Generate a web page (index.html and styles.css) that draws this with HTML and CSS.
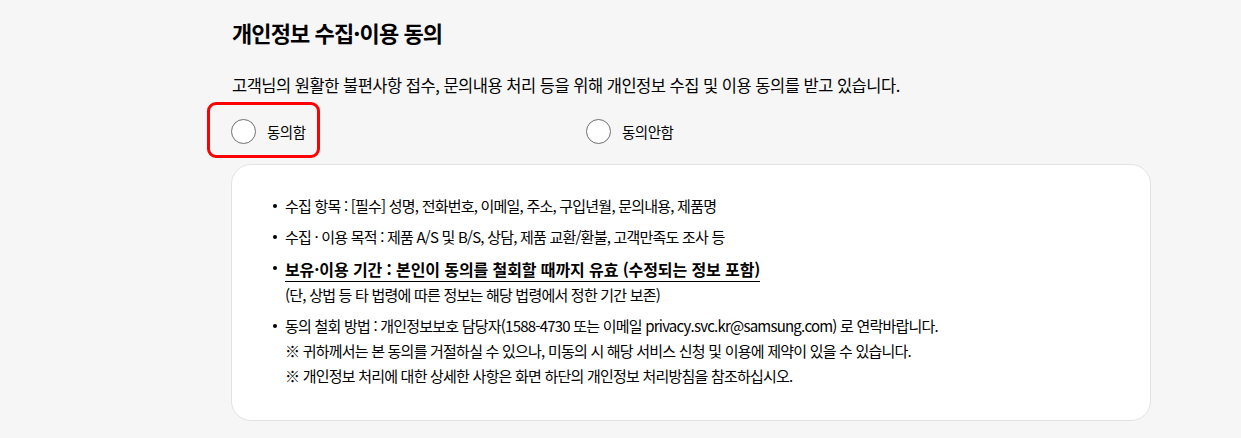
FILE: index.html
```html
<!DOCTYPE html>
<html lang="ko">
<head>
<meta charset="utf-8">
<link rel="stylesheet" href="styles.css">
</head>
<body>
<main class="wrap">
  <h2 class="title">개인정보 수집·이용 동의</h2>
  <p class="desc">고객님의 원활한 불편사항 접수, 문의내용 처리 등을 위해 개인정보 수집 및 이용 동의를 받고 있습니다.</p>
  <div class="options">
    <label class="option option-agree">
      <span class="radio"></span>
      <span class="option-label">동의함</span>
      <span class="highlight"></span>
    </label>
    <label class="option">
      <span class="radio"></span>
      <span class="option-label">동의안함</span>
    </label>
  </div>
  <div class="card">
    <ul class="list">
      <li>수집 항목 : [필수] 성명, 전화번호, 이메일, 주소, 구입년월, 문의내용, 제품명</li>
      <li>수집 · 이용 목적 : 제품 A/S 및 B/S, 상담, 제품 교환/환불, 고객만족도 조사 등</li>
      <li class="strong-item"><span class="strong">보유·이용 기간 : 본인이 동의를 철회할 때까지 유효 (수정되는 정보 포함)</span><br>(단, 상법 등 타 법령에 따른 정보는 해당 법령에서 정한 기간 보존)</li>
      <li>동의 철회 방법 : 개인정보보호 담당자(1588-4730 또는 이메일 privacy.svc.kr@samsung.com) 로 연락바랍니다.<br>※ 귀하께서는 본 동의를 거절하실 수 있으나, 미동의 시 해당 서비스 신청 및 이용에 제약이 있을 수 있습니다.<br>※ 개인정보 처리에 대한 상세한 사항은 화면 하단의 개인정보 처리방침을 참조하십시오.</li>
    </ul>
  </div>
</main>
</body>
</html>
```

FILE: styles.css
```css
html, body {
  margin: 0;
  padding: 0;
  background: #f6f6f6;
  color: #000;
  font-family: "Noto Sans CJK KR", "Noto Sans", sans-serif;
}

.wrap {
  width: 920px;
  margin-left: 231px;
  padding-top: 17px;
}

.title {
  margin: 0 0 0 1px;
  font-size: 22px;
  line-height: 30px;
  font-weight: 700;
  letter-spacing: -0.9px;
}

.desc {
  margin: 27px 0 0 1px;
  font-size: 16.5px;
  line-height: 22px;
  letter-spacing: -0.5px;
}

.options {
  display: flex;
  margin-top: 20px;
  height: 30px;
}

.option {
  position: relative;
  display: flex;
  align-items: center;
  gap: 11px;
  width: 355px;
}

.radio {
  width: 23px;
  height: 23px;
  border: 1px solid #6f6f6f;
  border-radius: 50%;
  background: #fff;
}

.option-label {
  font-size: 14.5px;
  letter-spacing: -0.5px;
}

.highlight {
  position: absolute;
  left: -24px;
  top: -14px;
  width: 107px;
  height: 50px;
  border: 3px solid #f00;
  border-radius: 9px;
}

.card {
  margin-top: 18px;
  background: #fff;
  border: 1px solid #e2e2e2;
  border-radius: 20px;
  padding: 28px 0 32px 0;
}

.list {
  list-style: none;
  margin: 0;
  padding: 0 0 0 53px;
}

.list li {
  position: relative;
  font-size: 15px;
  line-height: 25px;
  letter-spacing: -0.78px;
  margin-top: 6px;
}

.list li:first-child {
  margin-top: 0;
}

.list li::before {
  content: "";
  position: absolute;
  left: -12px;
  top: 11px;
  width: 4px;
  height: 4px;
  border-radius: 50%;
  background: #000;
}

.strong-item {
  padding-top: 2px;
}

.strong {
  display: inline-block;
  font-weight: 700;
  font-size: 16px;
  line-height: 23px;
  letter-spacing: -0.1px;
  border-bottom: 1px solid #000;
}
```
